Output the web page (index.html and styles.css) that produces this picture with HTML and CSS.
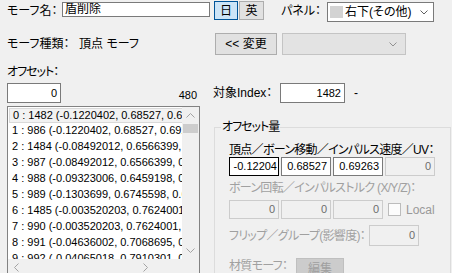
FILE: index.html
```html
<!DOCTYPE html>
<html lang="ja">
<head>
    <meta charset="UTF-8">
    <title>モーフ編集</title>
    <link rel="stylesheet" href="styles.css">
</head>
<body>
    <div class="form">
        <div class="row row-name">
            <span class="lbl lbl-name">モーフ名：</span>
            <div class="edit name">盾削除</div>
            <div class="btn lang on">日</div>
            <div class="btn lang en">英</div>
            <span class="lbl lbl-panel">パネル：</span>
            <div class="combo panel">
                <span class="swatch"></span>
                <span>右下(その他)</span>
                <svg class="chev" width="8" height="5" viewBox="0 0 8 5"><path d="M0.5 0.5 L4 4 L7.5 0.5" fill="none" stroke="#606060"/></svg>
            </div>
        </div>

        <div class="row row-kind">
            <span class="lbl lbl-kind">モーフ種類：</span>
            <span class="kind">頂点 モーフ</span>
            <div class="btn change">&lt;&lt; 変更</div>
            <div class="combo off">
                <svg class="chev" width="8" height="5" viewBox="0 0 8 5"><path d="M0.5 0.5 L4 4 L7.5 0.5" fill="none" stroke="#909090"/></svg>
            </div>
        </div>

        <div class="cols">
            <div class="left">
                <div class="lbl lbl-offset">オフセット：</div>
                <div class="offset-row">
                    <div class="edit num offset">0</div>
                    <span class="count">480</span>
                </div>
                <div class="listbox">
                    <div class="items">
                        <div class="item sel">0 : 1482 (-0.1220402, 0.68527, 0.69263)</div>
                        <div class="item">1 : 986 (-0.1220402, 0.68527, 0.69263)</div>
                        <div class="item">2 : 1484 (-0.08492012, 0.6566399, 0.7166101)</div>
                        <div class="item">3 : 987 (-0.08492012, 0.6566399, 0.7166101)</div>
                        <div class="item">4 : 988 (-0.09323006, 0.6459198, 0.7259001)</div>
                        <div class="item">5 : 989 (-0.1303699, 0.6745598, 0.6831)</div>
                        <div class="item">6 : 1485 (-0.003520203, 0.7624001, 0.6409)</div>
                        <div class="item">7 : 990 (-0.003520203, 0.7624001, 0.6409)</div>
                        <div class="item">8 : 991 (-0.04636002, 0.7068695, 0.6872)</div>
                        <div class="item">9 : 992 (-0.04065018, 0.7910301, 0.6034)</div>
                    </div>
                    <div class="vscroll">
                        <div class="arrow">
                            <svg width="9" height="5" viewBox="0 0 9 5"><path d="M0.5 4.5 L4.5 0.5 L8.5 4.5" fill="none" stroke="#a3a3a3"/></svg>
                        </div>
                        <div class="vthumb"></div>
                        <div class="arrow down">
                            <svg width="9" height="5" viewBox="0 0 9 5"><path d="M0.5 0.5 L4.5 4.5 L8.5 0.5" fill="none" stroke="#a3a3a3"/></svg>
                        </div>
                    </div>
                    <div class="hscroll">
                        <div class="arrow">
                            <svg width="5" height="9" viewBox="0 0 5 9"><path d="M4.5 0.5 L0.5 4.5 L4.5 8.5" fill="none" stroke="#a3a3a3"/></svg>
                        </div>
                        <div class="hthumb"></div>
                        <div class="arrow right">
                            <svg width="5" height="9" viewBox="0 0 5 9"><path d="M0.5 0.5 L4.5 4.5 L0.5 8.5" fill="none" stroke="#a3a3a3"/></svg>
                        </div>
                    </div>
                    <div class="corner"></div>
                </div>
            </div>

            <div class="right">
                <div class="index-row">
                    <span class="lbl lbl-index">対象Index：</span>
                    <div class="edit num index">1482</div>
                    <span class="dash">-</span>
                </div>

                <fieldset class="group">
                    <legend>オフセット量</legend>
                    <div class="gbody">
                        <div class="glbl first">頂点／ボーン移動／インパルス速度／UV：</div>
                        <div class="boxes">
                            <div class="edit num focus">-0.12204</div>
                            <div class="edit num">0.68527</div>
                            <div class="edit num">0.69263</div>
                            <div class="edit num dis">0</div>
                        </div>
                        <div class="glbl gray">ボーン回転／インパルストルク (X/Y/Z)：</div>
                        <div class="boxes second">
                            <div class="edit num dis">0</div>
                            <div class="edit num dis">0</div>
                            <div class="edit num dis">0</div>
                            <span class="check"></span>
                            <span class="local">Local</span>
                        </div>
                        <div class="flip-row">
                            <span class="glbl gray lbl-flip">フリップ／グループ(影響度)：</span>
                            <div class="edit num dis">0</div>
                        </div>
                        <div class="mat-row">
                            <span class="glbl gray lbl-mat">材質モーフ：</span>
                            <div class="btn dis-btn">編集</div>
                        </div>
                    </div>
                </fieldset>
            </div>
        </div>
    </div>
</body>
</html>
```

FILE: styles.css
```css
* {
    box-sizing: border-box;
}

body {
    margin: 0;
    width: 452px;
    height: 273px;
    overflow: hidden;
    background: #f0f0f0;
    color: #000;
    font-family: "Liberation Sans", "Noto Sans CJK JP", sans-serif;
    font-size: 12px;
    line-height: 14px;
    font-feature-settings: "palt";
}

.form {
    padding-left: 7px;
}

.row {
    display: flex;
    align-items: center;
    height: 22px;
}

.lbl {
    white-space: nowrap;
}

/* common controls */
.edit {
    background: #fff;
    border: 1px solid #7a7a7a;
    height: 20px;
    line-height: 18px;
    padding: 0 3px;
    white-space: nowrap;
    overflow: hidden;
}

.edit.num {
    text-align: right;
    font-size: 11px;
}

.edit.focus {
    border-color: #000;
    padding: 0 1px;
}

.edit.dis {
    background: #f0f0f0;
    border-color: #cccccc;
    color: #6d6d6d;
}

.btn {
    display: flex;
    align-items: center;
    justify-content: center;
    background: #e1e1e1;
    border: 1px solid #adadad;
}

.combo {
    display: flex;
    align-items: center;
    background: #fff;
    border: 1px solid #7a7a7a;
}

.chev {
    margin-left: auto;
}

/* first row */
.lbl-name {
    width: 55px;
}

.edit.name {
    width: 148px;
    height: 15px;
    line-height: 13px;
    padding: 0 2px;
    align-self: flex-start;
    margin-top: 2px;
}

.lang {
    width: 24px;
    height: 19px;
    align-self: flex-start;
    margin-top: 1px;
    margin-left: 4px;
}

.lang.on {
    background: #cce4f7;
    border-color: #005499;
}

.lang.en {
    width: 25px;
    margin-left: 1px;
}

.lbl-panel {
    width: 46px;
    margin-left: 17px;
}

.combo.panel {
    width: 107px;
    height: 20px;
    align-self: flex-start;
    margin-top: 2px;
    padding-left: 2px;
}

.combo.panel .chev {
    margin-right: 5px;
}

.swatch {
    width: 13px;
    height: 12px;
    background: #d3d3d3;
    margin-right: 2px;
}

/* second row */
.row-kind {
    margin-top: 11px;
}

.lbl-kind {
    width: 72px;
}

.kind {
    width: 136px;
}

.btn.change {
    width: 62px;
    height: 22px;
}

.combo.off {
    width: 124px;
    height: 22px;
    margin-left: 5px;
    background: #e3e3e3;
    border-color: #c4c4c4;
}

.combo.off .chev {
    margin-right: 8px;
}

/* columns */
.cols {
    display: flex;
}

.left {
    width: 193px;
}

.lbl-offset {
    margin-top: 10px;
    letter-spacing: -1px;
}

.offset-row {
    display: flex;
    justify-content: space-between;
    margin-top: 4px;
}

.edit.offset {
    width: 54px;
}

.count {
    align-self: flex-end;
    font-size: 11px;
    margin-right: 3px;
    margin-bottom: 1px;
}

.listbox {
    margin-top: 3px;
    width: 193px;
    height: 172px;
    background: #fff;
    border: 1px solid #828282;
    display: grid;
    grid-template-columns: 174px 17px;
    grid-template-rows: 152px 17px;
}

.items {
    overflow: hidden;
    font-size: 11px;
}

.item {
    height: 16px;
    line-height: 16px;
    padding-left: 4px;
    white-space: nowrap;
}

.item.sel {
    margin: 1px 0 -1px 1px;
    height: 15px;
    line-height: 13px;
    padding-left: 3px;
    background: #f2f2f2;
    border: 1px solid #d9d9d9;
    border-right: none;
}

.vscroll,
.hscroll,
.corner {
    background: #f0f0f0;
}

.vscroll {
    display: flex;
    flex-direction: column;
}

.hscroll {
    display: flex;
}

.arrow {
    width: 17px;
    height: 17px;
    flex: none;
    display: flex;
    align-items: center;
    justify-content: center;
}

.arrow.down,
.arrow.right {
    margin: auto 0 0 auto;
}

.hscroll .arrow.right {
    margin: 0 0 0 auto;
}

.vthumb {
    height: 9px;
    margin: 0 1px;
    background: #cdcdcd;
}

.hthumb {
    width: 100px;
    margin: 1px 0 0 1px;
    background: #cdcdcd;
}

/* right column */
.right {
    width: 238px;
    margin-left: 13px;
}

.index-row {
    display: flex;
    align-items: center;
    margin-top: 28px;
}

.lbl-index {
    width: 67px;
}

.edit.index {
    width: 65px;
}

.dash {
    margin-left: 9px;
}

.group {
    margin: 18px 0 0 1px;
    width: 237px;
    height: 200px;
    padding: 0 0 0 6px;
    border: 1px solid #dcdcdc;
}

.group legend {
    padding: 0 1px;
    line-height: 13px;
    letter-spacing: -1px;
}

.gbody {
    padding-left: 8px;
}

.glbl {
    white-space: nowrap;
    letter-spacing: -0.7px;
}

.glbl.first {
    margin-top: 9px;
}

.glbl.gray {
    color: #a0a0a0;
    margin-top: 5px;
}

.boxes {
    display: flex;
    align-items: center;
    gap: 2px;
}

.boxes .edit {
    width: 50px;
    height: 19px;
    line-height: 17px;
}

.boxes.second {
    margin-top: 5px;
}

.check {
    width: 13px;
    height: 13px;
    margin-left: 3px;
    background: #fcfcfc;
    border: 1px solid #bcbcbc;
}

.local {
    margin-left: 3px;
    color: #999;
}

.flip-row {
    display: flex;
    align-items: center;
    margin-top: 6px;
}

.flip-row .glbl {
    margin-top: 0;
    width: 140px;
    flex: none;
}

.flip-row .edit {
    width: 50px;
    height: 21px;
    line-height: 19px;
}

.mat-row {
    display: flex;
    margin-top: 12px;
}

.mat-row .glbl {
    margin-top: 0;
    width: 67px;
    line-height: 16px;
}

.btn.dis-btn {
    width: 48px;
    height: 21px;
    background: #cccccc;
    border-color: #bfbfbf;
    color: #a0a0a0;
}
```
